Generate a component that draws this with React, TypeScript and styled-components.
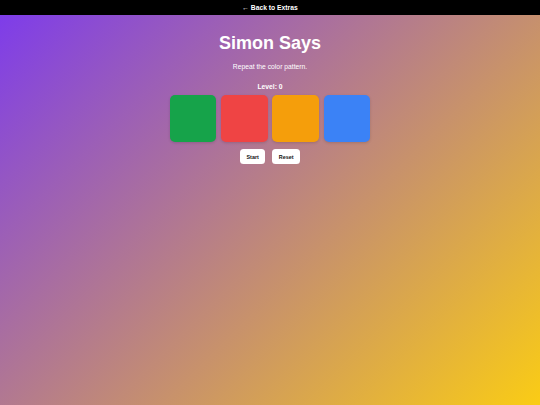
import React from "react";
import styled, { createGlobalStyle } from "styled-components";

const Global = createGlobalStyle`
  html, body { margin: 0; padding: 0; }
  body {
    font-family: "Liberation Sans", Arial, sans-serif;
    min-height: 405px;
    background: linear-gradient(135deg, #7c3aed 0%, #facc15 100%);
    background-attachment: fixed;
  }
`;

const Page = styled.div`
  width: 540px;
  height: 405px;
  display: flex;
  flex-direction: column;
`;

const TopBar = styled.div`
  height: 15px;
  background: #000;
  display: flex;
  align-items: center;
  justify-content: center;
`;

const BackLink = styled.a`
  color: #fff;
  font-weight: 700;
  font-size: 6.75px;
  text-decoration: none;
`;

const Main = styled.main`
  display: flex;
  flex-direction: column;
  align-items: center;
  color: #fff;
  padding-top: 17px;
`;

const Title = styled.h1`
  margin: 0;
  font-size: 18px;
  line-height: 22px;
  font-weight: 700;
`;

const Subtitle = styled.p`
  margin: 9px 0 0;
  font-size: 6.75px;
  line-height: 8px;
`;

const Level = styled.div`
  margin-top: 12px;
  font-size: 6.75px;
  line-height: 8px;
  font-weight: 700;
`;

const Pads = styled.div`
  margin-top: 4px;
  display: flex;
  gap: 4.8px;
`;

const Pad = styled.button<{ $color: string }>`
  width: 46.5px;
  height: 46.5px;
  border: none;
  padding: 0;
  border-radius: 5px;
  background: ${(p) => p.$color};
  box-shadow: 0 1px 3px rgba(0, 0, 0, 0.15);
  cursor: pointer;
`;

const Controls = styled.div`
  margin-top: 7.5px;
  display: flex;
  gap: 7px;
`;

const Button = styled.button`
  height: 15px;
  padding: 0 6.5px;
  border: none;
  border-radius: 3.5px;
  background: #fff;
  color: #111;
  font-family: "Liberation Sans", Arial, sans-serif;
  font-size: 5.4px;
  font-weight: 700;
  cursor: pointer;
`;

const colors = ["#16a34a", "#ef4444", "#f59e0b", "#3b82f6"];

export default function App() {
  return (
    <Page>
      <Global />
      <TopBar>
        <BackLink href="#">← Back to Extras</BackLink>
      </TopBar>
      <Main>
        <Title>Simon Says</Title>
        <Subtitle>Repeat the color pattern.</Subtitle>
        <Level>Level: 0</Level>
        <Pads>
          {colors.map((c) => (
            <Pad key={c} $color={c} />
          ))}
        </Pads>
        <Controls>
          <Button>Start</Button>
          <Button>Reset</Button>
        </Controls>
      </Main>
    </Page>
  );
}
